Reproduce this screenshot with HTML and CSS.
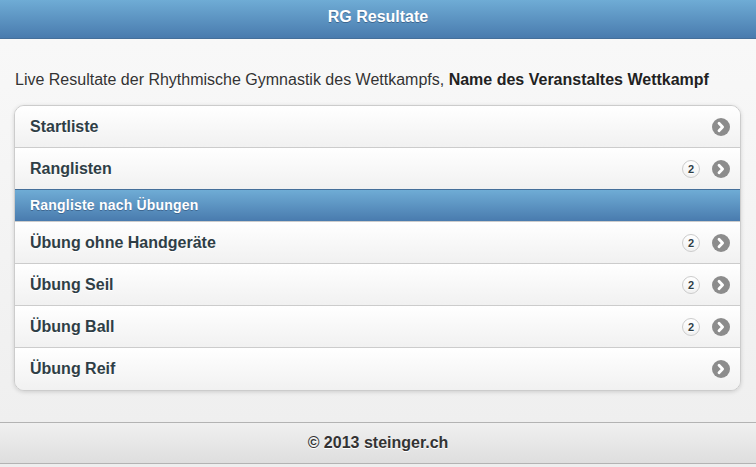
FILE: index.html
```html
<!DOCTYPE html>
<html lang="de">
<head>
<meta charset="utf-8">
<title>RG Resultate</title>
<link rel="stylesheet" href="styles.css">
</head>
<body>
<div class="page">
  <header class="bar-header"><h1>RG Resultate</h1></header>
  <main class="content">
    <p class="intro">Live Resultate der Rhythmische Gymnastik des Wettkampfs, <strong>Name des Veranstaltes Wettkampf</strong></p>
    <ul class="listview">
      <li class="item"><span class="label">Startliste</span><span class="arrow"><svg width="18" height="18" viewBox="0 0 18 18"><circle cx="9" cy="9" r="9" fill="#8c8c8c"/><path d="M7 5.2 L10.6 9 L7 12.8" fill="none" stroke="#fff" stroke-width="2.8" stroke-linecap="round" stroke-linejoin="round"/></svg></span></li>
      <li class="item"><span class="label">Ranglisten</span><span class="count">2</span><span class="arrow"><svg width="18" height="18" viewBox="0 0 18 18"><circle cx="9" cy="9" r="9" fill="#8c8c8c"/><path d="M7 5.2 L10.6 9 L7 12.8" fill="none" stroke="#fff" stroke-width="2.8" stroke-linecap="round" stroke-linejoin="round"/></svg></span></li>
      <li class="divider">Rangliste nach Übungen</li>
      <li class="item"><span class="label">Übung ohne Handgeräte</span><span class="count">2</span><span class="arrow"><svg width="18" height="18" viewBox="0 0 18 18"><circle cx="9" cy="9" r="9" fill="#8c8c8c"/><path d="M7 5.2 L10.6 9 L7 12.8" fill="none" stroke="#fff" stroke-width="2.8" stroke-linecap="round" stroke-linejoin="round"/></svg></span></li>
      <li class="item"><span class="label">Übung Seil</span><span class="count">2</span><span class="arrow"><svg width="18" height="18" viewBox="0 0 18 18"><circle cx="9" cy="9" r="9" fill="#8c8c8c"/><path d="M7 5.2 L10.6 9 L7 12.8" fill="none" stroke="#fff" stroke-width="2.8" stroke-linecap="round" stroke-linejoin="round"/></svg></span></li>
      <li class="item"><span class="label">Übung Ball</span><span class="count">2</span><span class="arrow"><svg width="18" height="18" viewBox="0 0 18 18"><circle cx="9" cy="9" r="9" fill="#8c8c8c"/><path d="M7 5.2 L10.6 9 L7 12.8" fill="none" stroke="#fff" stroke-width="2.8" stroke-linecap="round" stroke-linejoin="round"/></svg></span></li>
      <li class="item item-last"><span class="label">Übung Reif</span><span class="arrow"><svg width="18" height="18" viewBox="0 0 18 18"><circle cx="9" cy="9" r="9" fill="#8c8c8c"/><path d="M7 5.2 L10.6 9 L7 12.8" fill="none" stroke="#fff" stroke-width="2.8" stroke-linecap="round" stroke-linejoin="round"/></svg></span></li>
    </ul>
  </main>
  <footer class="bar-footer"><h4>© 2013 steinger.ch</h4></footer>
</div>
</body>
</html>
```

FILE: styles.css
```css
html, body {
  margin: 0;
  padding: 0;
}
body {
  font-family: "Liberation Sans", Arial, Helvetica, sans-serif;
  background: linear-gradient(#f9f9f9, #eeeeee);
  min-height: 467px;
  color: #333;
}
.page {
  display: flex;
  flex-direction: column;
}
.bar-header {
  height: 38px;
  border-bottom: 1px solid #456f9a;
  background: linear-gradient(#6facd5, #497bae);
  display: flex;
  align-items: center;
  justify-content: center;
}
.bar-header h1 {
  margin: 0;
  font-size: 16px;
  font-weight: bold;
  color: #fff;
  text-shadow: 0 1px 0 #3e6790;
  position: relative;
  top: -2px;
}
.content {
  padding: 15px 15px 15px 15px;
}
.intro {
  margin: 16px 0 15px;
  font-size: 16px;
  line-height: 20px;
  color: #333;
  text-shadow: 0 1px 0 #fff;
}
.intro strong {
  color: #222;
}
.listview {
  list-style: none;
  margin: 0 0 16px -1px;
  padding: 0;
  border: 1px solid #ccc;
  border-radius: 10px;
  overflow: hidden;
  box-shadow: 0 1px 4px rgba(0, 0, 0, 0.15);
}
.item {
  display: flex;
  align-items: center;
  gap: 12px;
  padding: 11px 10px 11px 15px;
  line-height: 19px;
  font-size: 16px;
  font-weight: bold;
  color: #2f3e46;
  text-shadow: 0 1px 0 #fff;
  background: linear-gradient(#ffffff, #f1f1f1);
  border-top: 1px solid #ccc;
}
.item:first-child {
  border-top: 0;
}
.item-last {
  padding-bottom: 12px;
}
.label {
  flex: 1;
}
.count {
  font-size: 11px;
  font-weight: bold;
  line-height: 16px;
  height: 16px;
  min-width: 8px;
  padding: 0 4px;
  text-align: center;
  border: 1px solid #ccc;
  border-radius: 10px;
  background: linear-gradient(#ffffff, #f1f1f1);
  color: #2f3e46;
}
.arrow {
  display: flex;
  width: 18px;
  height: 18px;
}
.divider {
  padding: 0 15px;
  line-height: 31px;
  font-size: 14px;
  font-weight: bold;
  letter-spacing: 0.2px;
  color: #fff;
  text-shadow: 0 1px 0 #3e6790;
  background: linear-gradient(#6facd5, #497bae);
  border-top: 1px solid #456f9a;
}
.bar-footer {
  border-top: 1px solid #b3b3b3;
  border-bottom: 1px solid #b3b3b3;
  background: linear-gradient(#f0f0f0, #dedede);
  height: 40px;
  display: flex;
  align-items: center;
  justify-content: center;
}
.bar-footer h4 {
  margin: 0;
  font-size: 16px;
  font-weight: bold;
  color: #333;
  text-shadow: 0 1px 0 #fff;
}
```
